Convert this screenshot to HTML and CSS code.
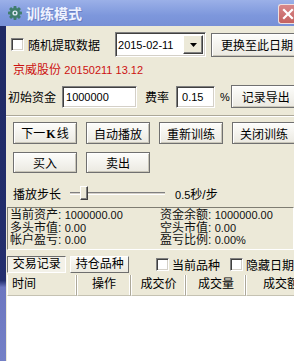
FILE: index.html
```html
<!DOCTYPE html>
<html lang="zh-CN">
<head>
<meta charset="utf-8">
<title>训练模式</title>
<link rel="stylesheet" href="styles.css">
</head>
<body>
<div class="titlebar">
  <svg class="gear" width="14" height="14" viewBox="0 0 14 14">
    <g fill="#3f7d6c">
      <rect x="5.5" y="0" width="3" height="14" rx="0.8"/>
      <rect x="0" y="5.5" width="14" height="3" ry="0.8"/>
      <rect x="5.5" y="0" width="3" height="14" rx="0.8" transform="rotate(45 7 7)"/>
      <rect x="5.5" y="0" width="3" height="14" rx="0.8" transform="rotate(-45 7 7)"/>
      <circle cx="7" cy="7" r="5"/>
    </g>
    <circle cx="7" cy="7" r="2.6" fill="#dfe8f4"/>
    <circle cx="7" cy="7" r="1.2" fill="#3f7d6c"/>
  </svg>
  <span class="title">训练模式</span>
  <span class="close">
    <svg width="12" height="12" viewBox="0 0 12 12"><path d="M2 2 L10 10 M10 2 L2 10" stroke="#fff" stroke-width="2.2" stroke-linecap="square"/></svg>
  </span>
</div>
<div class="main">
  <div class="strip"></div>
  <div class="content">
    <div class="row r1">
      <span class="chk"></span>
      <span class="lbl">随机提取数据</span>
      <div class="combo">
        <span class="n">2015-02-11</span>
        <span class="drop"><svg width="7" height="4" viewBox="0 0 7 4"><path d="M0 0 H7 L3.5 4 Z" fill="#000"/></svg></span>
      </div>
      <button class="btn change">更换至此日期</button>
    </div>
    <div class="stock">京威股份 <span class="n">20150211 13.12</span></div>
    <div class="row r3">
      <span>初始资金</span>
      <div class="field f-cap"><span class="n">1000000</span></div>
      <span class="rate">费率</span>
      <div class="field f-rate"><span class="n">0.15</span></div>
      <span class="pct">%</span>
      <button class="btn export">记录导出</button>
    </div>
    <div class="sep"></div>
    <div class="row btns b1">
      <button class="btn act">下一<b>K</b>线</button>
      <button class="btn act">自动播放</button>
      <button class="btn act">重新训练</button>
      <button class="btn act">关闭训练</button>
    </div>
    <div class="row btns b2">
      <button class="btn act">买入</button>
      <button class="btn act">卖出</button>
    </div>
    <div class="row sl">
      <span>播放步长</span>
      <div class="slider"><div class="track"></div><div class="thumb"></div></div>
      <span class="speed"><span class="n">0.5</span>秒/步</span>
    </div>
    <div class="info">
      <span>当前资产: <span class="n">1000000.00</span></span>
      <span>资金余额: <span class="n">1000000.00</span></span>
      <span>多头市值: <span class="n">0.00</span></span>
      <span>空头市值: <span class="n">0.00</span></span>
      <span>帐户盈亏: <span class="n">0.00</span></span>
      <span>盈亏比例: <span class="n">0.00%</span></span>
    </div>
    <div class="row tabs">
      <span class="tab on">交易记录</span>
      <span class="tab">持仓品种</span>
      <span class="chk c2"></span>
      <span class="lbl">当前品种</span>
      <span class="chk c3"></span>
      <span class="lbl">隐藏日期</span>
    </div>
    <div class="table">
      <div class="thead">
        <span class="th t1">时间</span>
        <span class="th t2">操作</span>
        <span class="th t3">成交价</span>
        <span class="th t4">成交量</span>
        <span class="th t5">成交额</span>
      </div>
      <div class="tbody"></div>
    </div>
  </div>
</div>
</body>
</html>
```
FILE: styles.css
```css
* { box-sizing: border-box; }
html, body {
  margin: 0;
  padding: 0;
  width: 294px;
  height: 361px;
  overflow: hidden;
  background: #ece9d8;
}
body {
  font-family: "Liberation Sans", "Noto Sans CJK SC", sans-serif;
  font-size: 12px;
  color: #000;
}
.n { font-size: 11px; }

.titlebar {
  height: 26px;
  display: flex;
  align-items: center;
  padding-left: 8px;
  background: linear-gradient(#9bb0e8, #7d97dc 60%, #7890d6);
  position: relative;
}
.gear { margin-right: 4px; }
.title {
  color: #eef2ff;
  font-weight: bold;
  font-size: 14px;
  letter-spacing: 0;
  text-shadow: 1px 1px 0 #6a80c4;
}
.close {
  margin-left: auto;
  width: 16px;
  height: 20px;
  margin-top: 1px;
  background: linear-gradient(#d8878a, #c4625f);
  border: 1px solid #eedede;
  border-right: none;
  border-radius: 3px 0 0 3px;
  display: flex;
  align-items: center;
  justify-content: center;
  padding-left: 2px;
}

.main {
  display: flex;
  height: 335px;
}
.strip {
  width: 6px;
  flex: none;
  background: linear-gradient(#1f2a64 0, #232e6e 76%, #6c76c0 78%, #7480c6 100%);
}
.content {
  flex: 1;
  min-width: 0;
  overflow: hidden;
  background: #ece9d8;
}
.row {
  display: flex;
  align-items: center;
  white-space: nowrap;
}

.chk {
  width: 13px;
  height: 13px;
  flex: none;
  background: #fff;
  border: 1px solid;
  border-color: #808080 #fff #fff #808080;
  box-shadow: inset 1px 1px 0 #404040, inset -1px -1px 0 #d4d0c8;
}

.btn {
  font: inherit;
  color: #000;
  padding: 0;
  flex: none;
  border: 1px solid #707070;
  background: linear-gradient(#fdfdfb, #ebe9e1);
  box-shadow: inset 1px 1px 0 #fff, inset -1px -1px 0 #c9c6b9;
  white-space: nowrap;
}

.r1 { padding: 6px 0 0 5px; height: 31px; }
.r1 .lbl { margin-left: 4px; }
.combo {
  margin-left: 15px;
  width: 91px;
  height: 25px;
  flex: none;
  background: #fff;
  border: 1px solid;
  border-color: #808080 #fff #fff #808080;
  box-shadow: inset 1px 1px 0 #404040, inset -1px -1px 0 #d4d0c8;
  display: flex;
  align-items: center;
  padding-left: 2px;
}
.drop {
  margin-left: auto;
  margin-right: 2px;
  width: 20px;
  height: 19px;
  background: #ece9d8;
  border: 1px solid;
  border-color: #fff #404040 #404040 #fff;
  box-shadow: inset -1px -1px 0 #808080;
  display: flex;
  align-items: center;
  justify-content: center;
}
.change { margin-left: 5px; width: 92px; height: 24px; }

.stock {
  height: 26px;
  line-height: 26px;
  padding-left: 7px;
  color: #cc1111;
}

.r3 { margin-top: 2px; height: 23px; padding-left: 2px; }
.field {
  height: 22px;
  flex: none;
  background: #fff;
  border: 1px solid;
  border-color: #808080 #fff #fff #808080;
  box-shadow: inset 1px 1px 0 #404040, inset -1px -1px 0 #d4d0c8;
  display: flex;
  align-items: center;
  padding-left: 3px;
}
.f-cap { margin-left: 6px; width: 75px; }
.rate { margin-left: 8px; }
.f-rate { margin-left: 7px; width: 39px; padding-left: 5px; }
.pct { margin-left: 5px; width: 12px; font-size: 11px; }
.export { margin-left: 1px; width: 70px; height: 23px; }

.sep {
  margin-top: 7px;
  height: 2px;
  border-top: 1px solid #aca899;
  border-bottom: 1px solid #fff;
}

.btns { padding-left: 7px; gap: 9px; }
.b1 { margin-top: 5px; height: 22px; }
.b2 { margin-top: 8px; height: 21px; }
.act { width: 64px; height: 100%; }
.act b { font-family: "Liberation Serif", serif; font-size: 12px; margin: 0 1px; }

.sl { margin-top: 10px; height: 20px; padding-left: 7px; }
.slider {
  margin-left: 9px;
  width: 95px;
  height: 16px;
  flex: none;
  position: relative;
}
.track {
  margin-top: 7px;
  height: 3px;
  border-top: 1px solid #808080;
  border-bottom: 1px solid #fff;
  background: #d4d0c8;
}
.thumb {
  position: absolute;
  left: 10px;
  top: 1px;
  width: 8px;
  height: 14px;
  background: #ece9d8;
  border: 1px solid;
  border-color: #fff #404040 #404040 #fff;
  box-shadow: inset -1px -1px 0 #808080;
}
.speed { margin-left: 10px; }

.info {
  margin-top: 4px;
  margin-left: 1px;
  height: 43px;
  overflow: hidden;
  border: 1px solid;
  border-color: #7f7d72 #fff #fff #7f7d72;
  padding: 1px 0 0 2px;
  display: grid;
  grid-template-columns: 150px 200px;
  grid-auto-rows: 12.7px;
  line-height: 13px;
  color: #111;
  white-space: nowrap;
}

.tabs { margin-top: 6px; height: 17px; padding-left: 1px; }
.tab {
  height: 17px;
  line-height: 15px;
  padding: 0 4px;
  width: 60px;
  text-align: center;
  border: 1px solid;
  border-color: #fff #6e6e6e #6e6e6e #fff;
  background: linear-gradient(#fbfbf8, #ebe9df);
}
.tab.on {
  border-color: #6e6e6e #fff #fff #6e6e6e;
  background: #f3f1e8;
}
.tab + .tab { margin-left: 4px; width: 59px; }
.c2 { margin-left: 27px; }
.c3 { margin-left: 10px; }
.tabs .lbl { margin-left: 3px; }

.table { margin-top: 2px; margin-left: 1px; }
.thead {
  display: flex;
  height: 21px;
  white-space: nowrap;
}
.th {
  flex: none;
  height: 21px;
  line-height: 19px;
  text-align: center;
  background: #ece9d8;
  border-right: 1px solid #aca899;
  border-bottom: 1px solid #c5c2b2;
  box-shadow: inset -1px 0 0 #fff;
  border-left: 1px solid #fff;
}
.t1 { width: 70px; text-align: left; padding-left: 4px; }
.t2 { width: 54px; }
.t3 { width: 55px; }
.t4 { width: 60px; }
.t5 { width: 70px; }
.tbody {
  height: 80px;
  background: #fff;
}
```
